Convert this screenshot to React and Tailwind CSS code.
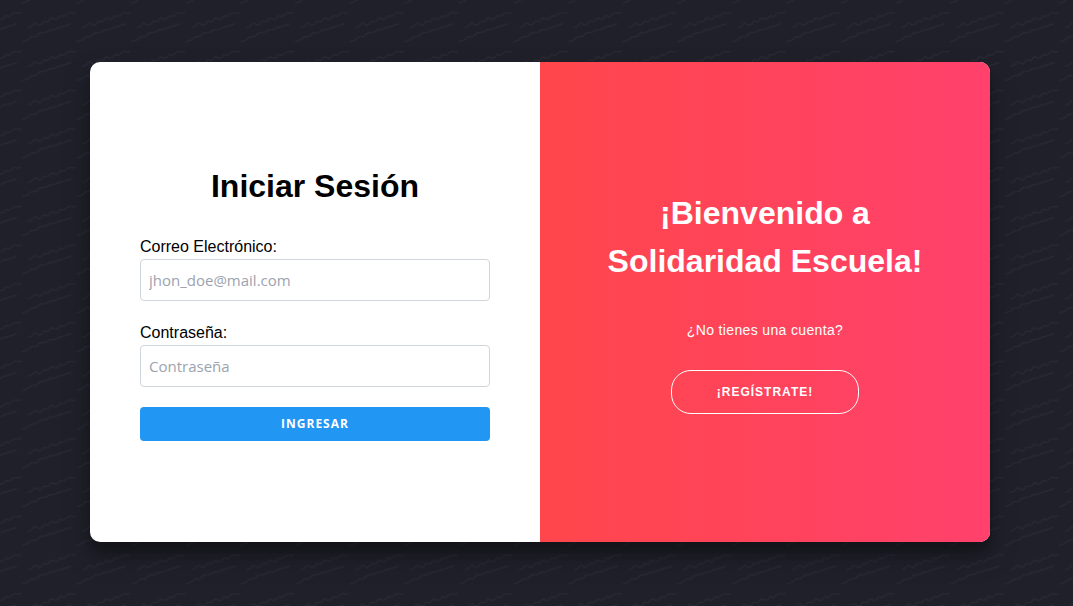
import React from 'react';

function WavePattern() {
  return (
    <svg className="absolute inset-0 h-full w-full" aria-hidden="true">
      <defs>
        <pattern
          id="waves"
          width="163.8"
          height="116.2"
          patternUnits="userSpaceOnUse"
          patternTransform="translate(21.5 11.3) scale(0.3333)"
        >
          <g fill="none" stroke="#292935" strokeWidth="4" strokeLinecap="round" strokeLinejoin="round">
            <path d="M20 49 Q30 48 34 41 T43 36 Q50 43 57 41 Q62 38 66 31 Q72 29 78 32 Q84 29 88 21 Q94 20 99 24 Q106 25 111 20 Q114 13 119 13 Q126 18 131 13 Q136 6 143 5 Q150 3 153 6 L162 4" />
            <path d="M3 91 Q15 89 20 85 Q26 77 34 76 Q42 77 47 74 Q52 66 59 64 Q68 65 76 62 Q82 56 90 55 Q98 57 104 53 Q111 48 120 47 L148 38" />
          </g>
        </pattern>
      </defs>
      <rect width="100%" height="100%" fill="url(#waves)" />
    </svg>
  );
}

function Field({ id, label, ...props }) {
  return (
    <div className="mb-5">
      <label htmlFor={id} className="block text-base text-black">
        {label}
      </label>
      <input
        id={id}
        className="block w-full rounded border border-gray-300 bg-white p-2 font-['Open_Sans','Noto_Sans',sans-serif] text-[15px] leading-6 text-black placeholder:text-[#9ca3af]"
        {...props}
      />
    </div>
  );
}

export default function App() {
  return (
    <main className="relative flex min-h-screen items-center justify-center bg-[#20202a] pb-0.5 pl-[7px] font-['Liberation_Sans',Arial,sans-serif]">
      <WavePattern />
      <div className="relative grid min-h-[480px] w-full max-w-[900px] overflow-hidden rounded-[10px] bg-white shadow-[0_14px_28px_rgba(0,0,0,0.25),0_10px_10px_rgba(0,0,0,0.22)] sm:grid-cols-2">
        <form className="flex flex-col justify-center px-[50px] pt-8 pb-[34px]" onSubmit={(e) => e.preventDefault()}>
          <h1 className="mb-[25px] text-center text-[32px] leading-[48px] font-bold text-black">Iniciar Sesión</h1>
          <Field id="email" label="Correo Electrónico:" type="email" placeholder="jhon_doe@mail.com" />
          <Field id="password" label="Contraseña:" type="password" placeholder="Contraseña" />
          <button
            type="submit"
            className="rounded bg-[#2196f3] py-2 font-['Open_Sans','Noto_Sans',sans-serif] text-xs leading-[18px] font-bold tracking-[1px] text-white uppercase"
          >
            Ingresar
          </button>
        </form>
        <section className="flex flex-col items-center justify-center bg-linear-to-r/srgb from-[#ff464b] to-[#ff416c] px-10 pt-8 pb-[34px] text-center text-white">
          <h2 className="text-[32px] leading-[48px] font-bold">¡Bienvenido a Solidaridad Escuela!</h2>
          <p className="mt-[35px] mb-[30px] text-sm tracking-wide">¿No tienes una cuenta?</p>
          <button
            type="button"
            className="rounded-[20px] border border-white px-[45px] py-3 text-xs leading-[18px] font-bold tracking-[1px] uppercase"
          >
            ¡Regístrate!
          </button>
        </section>
      </div>
    </main>
  );
}
